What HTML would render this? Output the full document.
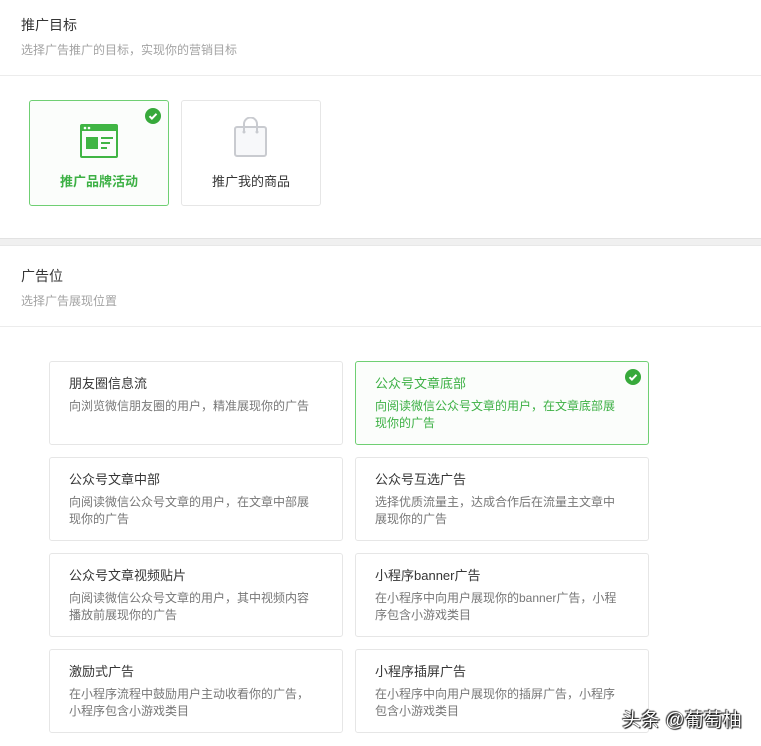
<!DOCTYPE html>
<html><head><meta charset="utf-8"><style>
*{margin:0;padding:0;box-sizing:border-box}
body{width:761px;height:746px;overflow:hidden;background:#fff;font-family:"Liberation Sans","Noto Sans CJK SC",sans-serif;position:relative}
.a{position:absolute}
.h{font-size:14px;color:#353535}
.s{font-size:12px;color:#a3a3a3}
.line{left:0;width:761px;height:1px;background:#ececec}
.tc{border:1px solid #e6e6e6;border-radius:3px;width:140px;height:106px;top:100px;text-align:center;font-size:13px;color:#353535}
.c{border:1px solid #e6e6e6;border-radius:3px;width:294px;height:84px;padding:12px 19px 0 19px}
.c .t{font-size:13px;color:#353535;line-height:20px}
.c .d{font-size:12px;color:#777;line-height:17px;margin-top:4px;width:243px}
.sel{border-color:#6fcf73;background:#fbfdfb}
.sel .t,.sel .d{color:#3cb044}
.chk{width:16px;height:16px;border-radius:50%;background:#37a93b}
</style></head><body>
<div class="a h" style="left:21px;top:15px">推广目标</div>
<div class="a s" style="left:21px;top:41px">选择广告推广的目标，实现你的营销目标</div>
<div class="a line" style="top:75px"></div>
<div class="a tc sel" style="left:29px">
<svg class="a" style="left:50px;top:23px" width="38" height="34" viewBox="0 0 38 34"><rect x="0" y="0" width="38" height="34" rx="2" fill="#40b544"/><rect x="2" y="7" width="34" height="25" fill="#fbfdfb"/><circle cx="5" cy="4" r="1.3" fill="#fff"/><circle cx="9" cy="4" r="1.3" fill="#fff"/><rect x="6" y="13" width="12" height="12" fill="#40b544"/><rect x="21" y="13" width="12" height="2" fill="#40b544"/><rect x="21" y="18" width="9" height="2" fill="#40b544"/><rect x="21" y="23" width="6" height="2" fill="#40b544"/></svg>
<div class="a" style="left:0;width:138px;top:70px;color:#3cb044;font-weight:bold">推广品牌活动</div>
<div class="a chk" style="left:115px;top:7px"><svg width="16" height="16"><path d="M4.5 8.2l2.4 2.4 4.6-4.8" stroke="#fff" stroke-width="2" fill="none"/></svg></div>
</div>
<div class="a tc" style="left:181px">
<svg class="a" style="left:52px;top:16px" width="34" height="40" viewBox="0 0 34 40"><rect x="1" y="10" width="31" height="29" rx="2" fill="#f7f8fa" stroke="#c9cbd0" stroke-width="2"/><path d="M10 14V7a6.5 6.5 0 0 1 13 0v7" stroke="#c9cbd0" stroke-width="2" fill="none"/><circle cx="10" cy="15" r="1.5" fill="#c9cbd0"/><circle cx="23" cy="15" r="1.5" fill="#c9cbd0"/></svg>
<div class="a" style="left:0;width:138px;top:70px">推广我的商品</div>
</div>
<div class="a" style="left:0;top:238px;width:761px;height:8px;background:#f0f0f0;border-top:1px solid #e2e2e2;border-bottom:1px solid #e8e8e8"></div>
<div class="a h" style="left:21px;top:266px">广告位</div>
<div class="a s" style="left:21px;top:292px">选择广告展现位置</div>
<div class="a line" style="top:326px"></div>

<div class="a c" style="left:49px;top:361px"><div class="t">朋友圈信息流</div><div class="d">向浏览微信朋友圈的用户，精准展现你的广告</div></div>
<div class="a c sel" style="left:355px;top:361px"><div class="t">公众号文章底部</div><div class="d">向阅读微信公众号文章的用户，在文章底部展现你的广告</div><div class="a chk" style="left:269px;top:7px"><svg width="16" height="16"><path d="M4.5 8.2l2.4 2.4 4.6-4.8" stroke="#fff" stroke-width="2" fill="none"/></svg></div></div>
<div class="a c" style="left:49px;top:457px"><div class="t">公众号文章中部</div><div class="d">向阅读微信公众号文章的用户，在文章中部展现你的广告</div></div>
<div class="a c" style="left:355px;top:457px"><div class="t">公众号互选广告</div><div class="d">选择优质流量主，达成合作后在流量主文章中展现你的广告</div></div>
<div class="a c" style="left:49px;top:553px"><div class="t">公众号文章视频贴片</div><div class="d">向阅读微信公众号文章的用户，其中视频内容播放前展现你的广告</div></div>
<div class="a c" style="left:355px;top:553px"><div class="t">小程序banner广告</div><div class="d">在小程序中向用户展现你的banner广告，小程序包含小游戏类目</div></div>
<div class="a c" style="left:49px;top:649px"><div class="t">激励式广告</div><div class="d">在小程序流程中鼓励用户主动收看你的广告，小程序包含小游戏类目</div></div>
<div class="a c" style="left:355px;top:649px"><div class="t">小程序插屏广告</div><div class="d">在小程序中向用户展现你的插屏广告，小程序包含小游戏类目</div></div>
<div class="a" style="left:622px;top:705px;font-size:19px;color:#fff;text-shadow:0 0 1px #000,1px 1px 1px #000,-1px -1px 1px #333">头条 @葡萄柚</div>
</body></html>
